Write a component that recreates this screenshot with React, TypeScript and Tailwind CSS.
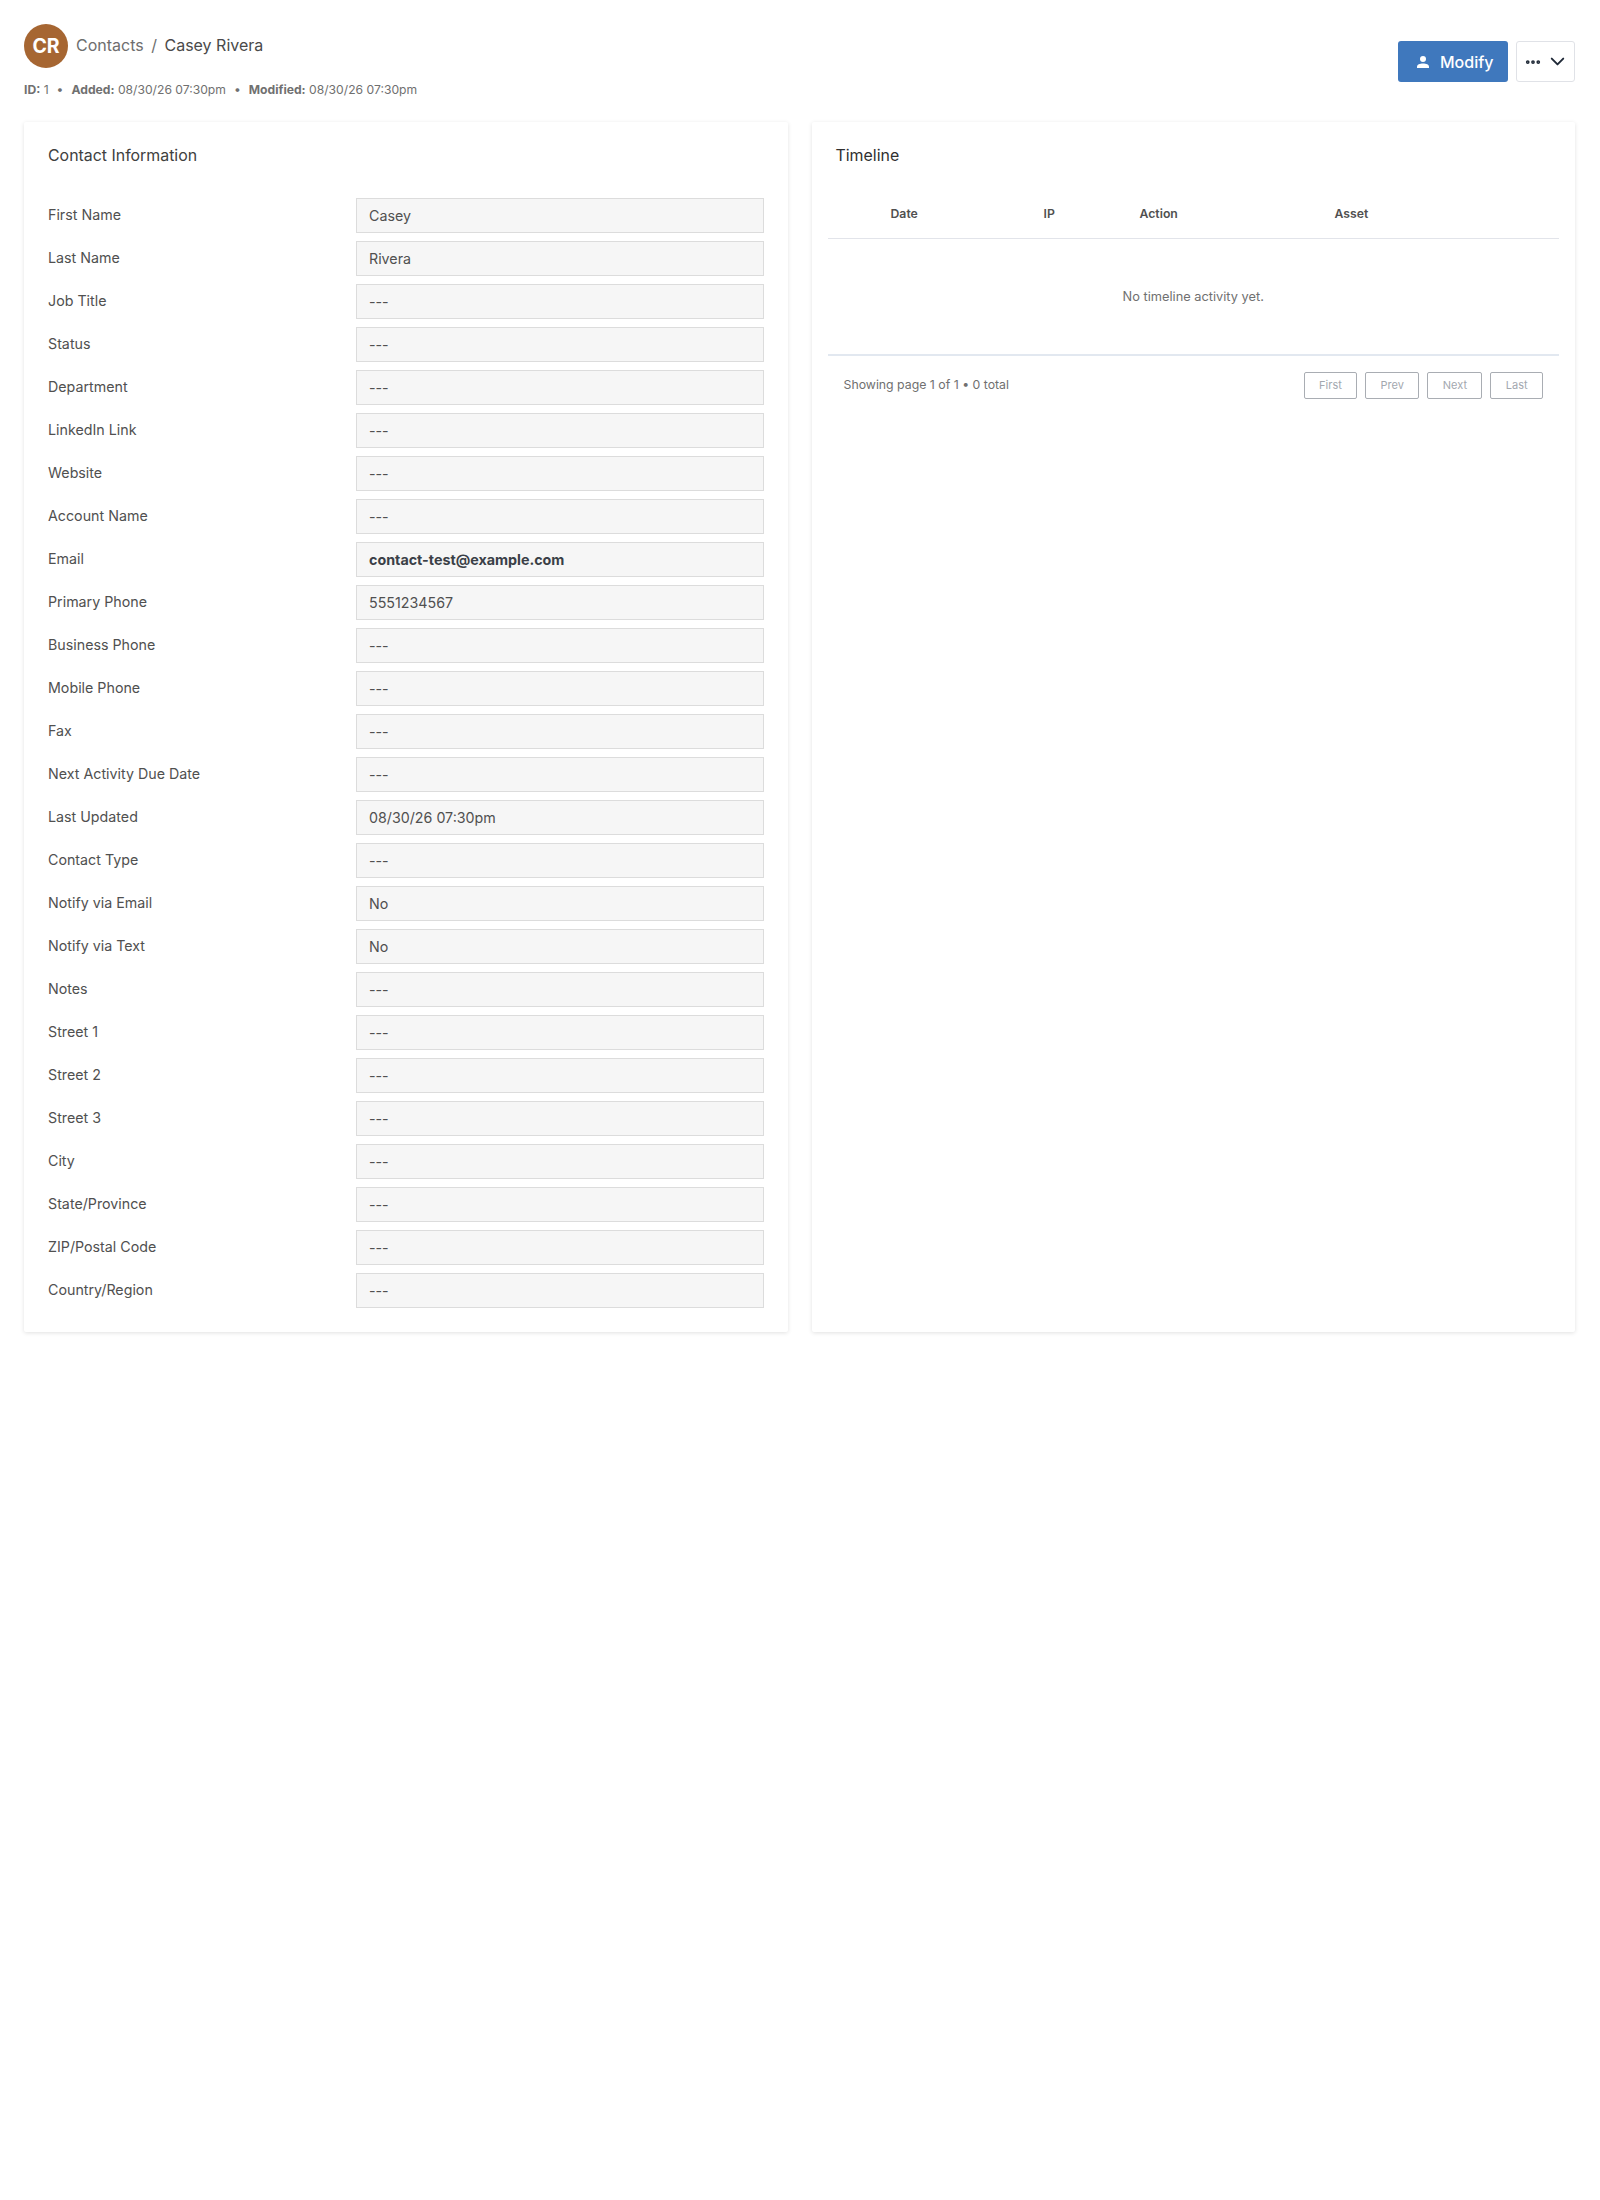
import { ChevronDown, Ellipsis } from "lucide-react";

const fields = [
  { label: "First Name", value: "Casey" },
  { label: "Last Name", value: "Rivera" },
  { label: "Job Title", value: "---" },
  { label: "Status", value: "---" },
  { label: "Department", value: "---" },
  { label: "LinkedIn Link", value: "---" },
  { label: "Website", value: "---" },
  { label: "Account Name", value: "---" },
  { label: "Email", value: "contact-test@example.com", bold: true },
  { label: "Primary Phone", value: "5551234567" },
  { label: "Business Phone", value: "---" },
  { label: "Mobile Phone", value: "---" },
  { label: "Fax", value: "---" },
  { label: "Next Activity Due Date", value: "---" },
  { label: "Last Updated", value: "08/30/26 07:30pm" },
  { label: "Contact Type", value: "---" },
  { label: "Notify via Email", value: "No" },
  { label: "Notify via Text", value: "No" },
  { label: "Notes", value: "---" },
  { label: "Street 1", value: "---" },
  { label: "Street 2", value: "---" },
  { label: "Street 3", value: "---" },
  { label: "City", value: "---" },
  { label: "State/Province", value: "---" },
  { label: "ZIP/Postal Code", value: "---" },
  { label: "Country/Region", value: "---" },
];

function PersonIcon() {
  return (
    <svg viewBox="0 0 14 14" className="w-[14px] h-[14px]" fill="currentColor">
      <circle cx="7" cy="4" r="3" />
      <path d="M1 13v-1.5C1 9.6 3.7 8.4 7 8.4s6 1.2 6 3.1V13z" />
    </svg>
  );
}

export default function App() {
  return (
    <div className="min-h-[2200px] bg-white py-6 pl-6 pr-[25px] font-['Inter',sans-serif] text-[#404040]">
      <div className="flex items-start justify-between h-[98px]">
        <div>
          <div className="flex items-center gap-2">
            <div className="w-11 h-11 pt-px rounded-full bg-[#a66632] text-white flex items-center justify-center text-[19.5px] font-bold">
              CR
            </div>
            <div className="text-base text-[#6e6e6e] -mt-[2px]">
              Contacts <span className="mx-[3px]">/</span> <span className="text-[#4a4a4a]">Casey Rivera</span>
            </div>
          </div>
          <div className="mt-[13px] flex items-center text-[12.15px] text-[#707070]">
            <span><b className="font-bold">ID:</b> 1</span>
            <span className="mx-2">•</span>
            <span><b className="font-bold">Added:</b> 08/30/26 07:30pm</span>
            <span className="mx-2">•</span>
            <span><b className="font-bold">Modified:</b> 08/30/26 07:30pm</span>
          </div>
        </div>
        <div className="flex gap-2 mt-[17px]">
          <button className="w-[110px] h-[41px] pl-[18px] rounded-[3px] bg-[#3f78bd] text-white flex items-center gap-[10px] text-base font-medium">
            <PersonIcon />
            Modify
          </button>
          <button className="w-[59px] h-[41px] pl-[7px] rounded-[3px] bg-white border border-[#e0e2e7] text-[#1f2937] flex items-center gap-[4px]">
            <Ellipsis className="w-[18px] h-[18px]" strokeWidth={3} />
            <ChevronDown className="w-[23px] h-[23px]" />
          </button>
        </div>
      </div>

      <div className="grid grid-cols-2 gap-6">
        <div className="bg-white shadow-[0_1px_4px_rgba(0,0,0,0.12)] rounded-[2px] p-6">
          <h2 className="text-[15.9px] text-[#404040] leading-6 -mt-[2px] mb-[30px]">Contact Information</h2>
          <div className="flex flex-col gap-2">
            {fields.map((f) => (
              <div key={f.label} className="flex items-center">
                <div className="w-[308px] pb-[2px] text-[14.25px] text-[#505050]">{f.label}</div>
                <div
                  className={
                    f.bold
                      ? "flex-1 h-[35px] px-[12px] flex items-center bg-[#f6f6f6] border border-[#dcdcdc] text-[14.3px] font-bold text-[#3a3f47]"
                      : "flex-1 h-[35px] px-[12px] flex items-center bg-[#f6f6f6] border border-[#dcdcdc] text-[14.25px] text-[#505050]"
                  }
                >
                  {f.value}
                </div>
              </div>
            ))}
          </div>
        </div>

        <div className="bg-white shadow-[0_1px_4px_rgba(0,0,0,0.12)] rounded-[2px] px-4 py-6">
          <h2 className="px-2 text-[15.9px] text-[#303030] leading-6 -mt-[2px]">Timeline</h2>
          <div className="mt-[22px] h-[49px] grid grid-cols-[153px_96px_195px_1fr] pl-[63px] items-center border-b border-[#e2e4ea] text-[12.25px] font-semibold text-[#505050]">
            <div>Date</div>
            <div>IP</div>
            <div>Action</div>
            <div>Asset</div>
          </div>
          <div className="h-[117px] flex items-center justify-center border-b-2 border-[#e2e8f0] text-[12.8px] text-[#707070]">
            No timeline activity yet.
          </div>
          <div className="mt-4 px-4 flex items-center justify-between">
            <div className="text-[12.3px] text-[#707070]">Showing page 1 of 1 • 0 total</div>
            <div className="flex gap-2">
              {["First", "Prev", "Next", "Last"].map((l) => (
                <button
                  key={l}
                  className="h-[27px] px-[14.4px] rounded-[2px] border border-[#a9adb3] bg-white text-[11px] text-[#a3a8af]"
                >
                  {l}
                </button>
              ))}
            </div>
          </div>
        </div>
      </div>
    </div>
  );
}
